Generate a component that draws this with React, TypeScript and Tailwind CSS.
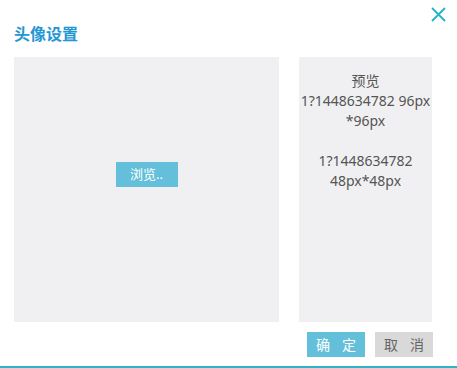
import React from 'react';

const App: React.FC = () => {
  return (
    <div
      className="relative w-[457px] h-[368px] bg-white border-b-2 border-[#2bb3c8] overflow-hidden"
      style={{ fontFamily: '"Noto Sans", "Noto Sans CJK SC", sans-serif' }}
    >
      {/* Close */}
      <button className="absolute right-[11px] top-[7px] w-[15px] h-[15px]">
        <svg viewBox="0 0 15 15" className="w-[15px] h-[15px]">
          <path d="M1 1 L14 14 M14 1 L1 14" stroke="#22b4c9" strokeWidth="1.8" fill="none" />
        </svg>
      </button>

      <div className="pt-[24px] px-[14px]">
        <h2 className="text-[16px] leading-[20px] font-bold text-[#2596d4]">头像设置</h2>

        <div className="flex mt-[13px] gap-[20px]">
          {/* Crop area */}
          <div className="w-[265px] h-[265px] bg-[#f0f0f2] flex justify-center pt-[105px]">
            <button className="w-[62px] h-[25px] bg-[#64bfdb] text-white text-[13px] leading-[25px]">
              浏览..
            </button>
          </div>

          {/* Preview */}
          <div className="w-[133px] h-[265px] bg-[#f0f0f2] pt-[14px] text-center text-[14px] leading-[20px] text-[#555]">
            <div>预览</div>
            <div className="whitespace-nowrap">1?1448634782 96px</div>
            <div>*96px</div>
            <div className="mt-[20px]">1?1448634782</div>
            <div>48px*48px</div>
          </div>
        </div>

        <div className="flex justify-end gap-[10px] mt-[10px] pr-[10px]">
          <button className="w-[58px] h-[25px] bg-[#64bfdb] text-white text-[14px] leading-[25px] flex justify-center gap-[12px]">
            <span>确</span>
            <span>定</span>
          </button>
          <button className="w-[58px] h-[25px] bg-[#d9d9d9] text-[#666] text-[14px] leading-[25px] flex justify-center gap-[12px]">
            <span>取</span>
            <span>消</span>
          </button>
        </div>
      </div>
    </div>
  );
};

export default App;
